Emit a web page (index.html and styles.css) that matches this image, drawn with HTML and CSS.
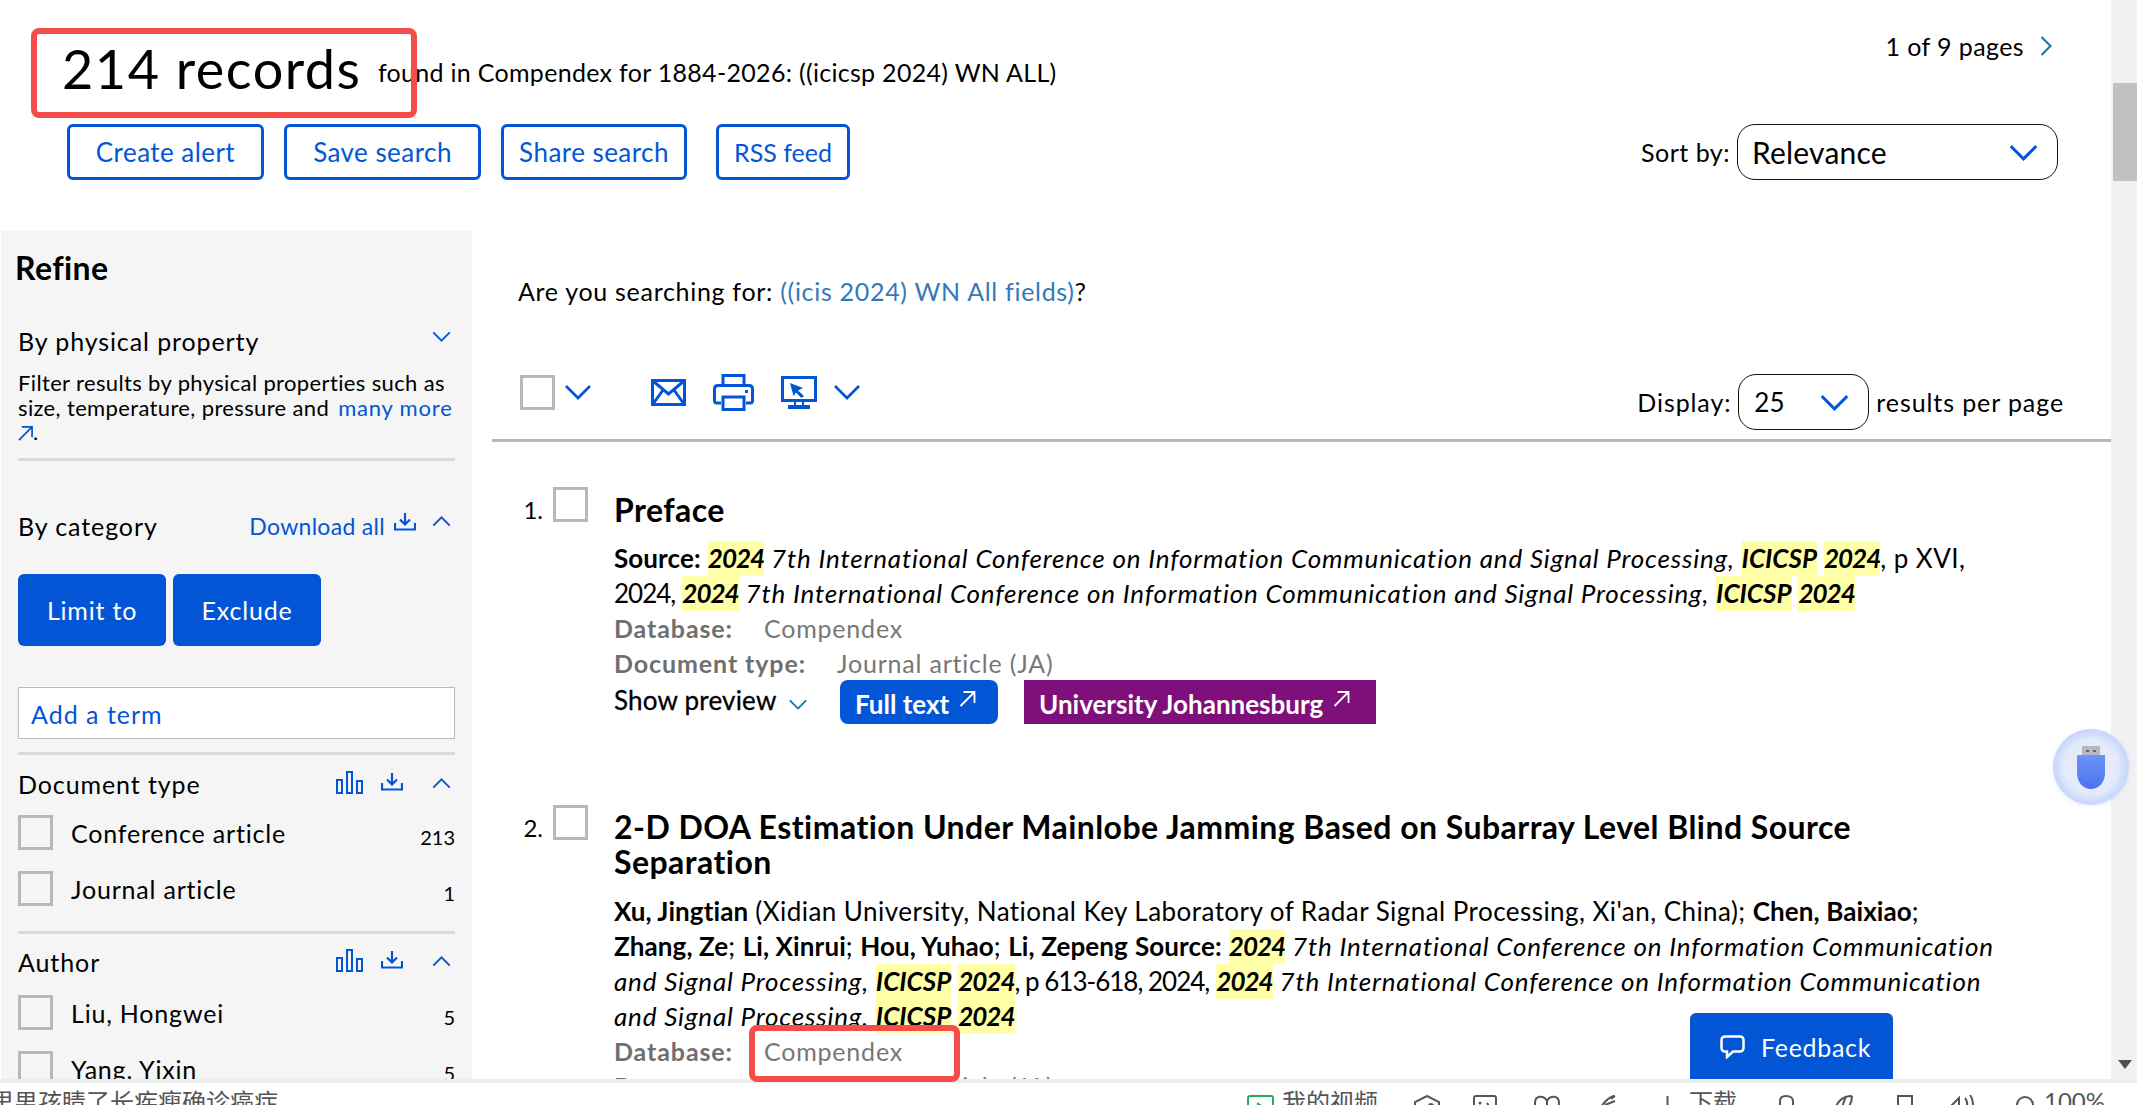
FILE: index.html
```html
<!DOCTYPE html>
<html lang="en">
<head>
<meta charset="utf-8">
<title>Compendex search results</title>
<link rel="stylesheet" href="styles.css">
</head>
<body>
<svg class="defs" width="0" height="0" aria-hidden="true">
  <symbol id="down" viewBox="0 0 20 12"><path d="M1 1.5 10 10.5 19 1.5" fill="none" stroke="currentColor" stroke-width="2"/></symbol>
  <symbol id="up" viewBox="0 0 20 12"><path d="M1 10.5 10 1.5 19 10.5" fill="none" stroke="currentColor" stroke-width="2"/></symbol>
  <symbol id="dl" viewBox="0 0 22 18"><path d="M11 0V11M6 6.5 11 11.500 16 6.500M1 10V16.500H21V10" fill="none" stroke="currentColor" stroke-width="2.200"/></symbol>
  <symbol id="bars" viewBox="0 0 27 23"><path d="M1 9H6V22H1ZM11 1H16V22H11ZM21 10H26V22H21Z" fill="none" stroke="currentColor" stroke-width="2"/></symbol>
  <symbol id="ext" viewBox="0 0 16 16"><path d="M1 15 15 1M4 1H15V12" fill="none" stroke="currentColor" stroke-width="1.800"/></symbol>
</svg>
<div class="app">
  <div class="viewport">
    <div class="content">
      <header class="head">
        <div class="head-row">
          <h1 class="count"><span class="count-num">214 records</span> <span class="count-rest">found in Compendex for 1884-2026: ((icicsp 2024) WN ALL)</span></h1>
          <div class="pages">1 of 9 pages
            <svg class="pages-next" width="12" height="20" viewBox="0 0 12 20"><path d="M1.500 1 10.500 10 1.500 19" fill="none" stroke="currentColor" stroke-width="2"/></svg>
          </div>
        </div>
        <div class="head-row actions-row">
          <div class="actions">
            <a class="btn-out btn-a">Create alert</a>
            <a class="btn-out btn-b">Save search</a>
            <a class="btn-out btn-c">Share search</a>
            <a class="btn-out btn-d">RSS feed</a>
          </div>
          <div class="sort">
            <span>Sort by:</span>
            <div class="select select-sort">Relevance <svg class="sel-chev" width="29" height="17"><use href="#down"/></svg></div>
          </div>
        </div>
      </header>
      <div class="layout">
        <aside class="side">
          <h2 class="refine">Refine</h2>
          <div class="side-head first"><span>By physical property</span><svg class="chev" width="19" height="11"><use href="#down"/></svg></div>
          <p class="side-desc">Filter results by physical properties such as<br>size, temperature, pressure and <a class="blue">many more</a><br><svg class="blue desc-ext" width="15" height="15"><use href="#ext"/></svg>.</p>
          <div class="rule rule-a"></div>
          <div class="side-head cat"><span>By category</span>
            <span class="side-tools"><a class="blue dl-all">Download all</a><svg class="tool" width="22" height="18"><use href="#dl"/></svg><svg class="chev" width="19" height="11"><use href="#up"/></svg></span>
          </div>
          <div class="limit-row"><button class="btn-fill">Limit to</button><button class="btn-fill">Exclude</button></div>
          <div class="add-term">Add a term</div>
          <div class="rule rule-b"></div>
          <div class="side-head facet"><span>Document type</span>
            <span class="side-tools"><svg class="tool" width="27" height="23"><use href="#bars"/></svg><svg class="tool" width="22" height="18"><use href="#dl"/></svg><svg class="chev" width="19" height="11"><use href="#up"/></svg></span>
          </div>
          <div class="term"><span class="box"></span><span class="term-name">Conference article</span><span class="term-n">213</span></div>
          <div class="term"><span class="box"></span><span class="term-name">Journal article</span><span class="term-n">1</span></div>
          <div class="rule rule-c"></div>
          <div class="side-head facet facet-author"><span>Author</span>
            <span class="side-tools"><svg class="tool" width="27" height="23"><use href="#bars"/></svg><svg class="tool" width="22" height="18"><use href="#dl"/></svg><svg class="chev" width="19" height="11"><use href="#up"/></svg></span>
          </div>
          <div class="term term-first"><span class="box"></span><span class="term-name">Liu, Hongwei</span><span class="term-n">5</span></div>
          <div class="term"><span class="box"></span><span class="term-name">Yang, Yixin</span><span class="term-n">5</span></div>
        </aside>
        <main class="results">
          <p class="suggest">Are you searching for: <a class="suggest-link">((icis 2024) WN All fields)</a>?</p>
          <div class="toolbar">
            <div class="tb-left">
              <span class="box"></span>
              <svg class="blue tb-chev" width="28" height="16"><use href="#down"/></svg>
              <svg class="blue tb-mail" width="35" height="27" viewBox="0 0 35 27"><path d="M1.500 1.500H33.500V25.500H1.500ZM2 2 17.500 15 33 2M2 25 12 11M33 25 23 11" fill="none" stroke="currentColor" stroke-width="3"/></svg>
              <svg class="blue tb-print" width="41" height="37" viewBox="0 0 41 37"><path d="M10 11V1.500H31V11M8 29H3.500C2 29 1.500 28 1.500 26.500V15C1.500 12.500 3 11.500 5 11.500H36C38 11.500 39.500 12.500 39.500 15V26.500C39.500 28 39 29 37.500 29H33M10 23H31V35.500H10Z" fill="none" stroke="currentColor" stroke-width="3"/><rect x="32" y="16" width="3" height="3" fill="currentColor"/></svg>
              <svg class="blue tb-screen" width="36" height="33" viewBox="0 0 36 33"><path d="M1.500 1.500H34.500V24.500H1.500Z" fill="none" stroke="currentColor" stroke-width="3"/><path d="M9 7 22 12 17 14.500 23 20 20.500 22 15 16.500 12.500 20Z" fill="currentColor"/><path d="M14 26V29M22 26V29" stroke="currentColor" stroke-width="2"/><rect x="7" y="29" width="22" height="4" fill="currentColor"/></svg>
              <svg class="blue tb-chev2" width="28" height="16"><use href="#down"/></svg>
            </div>
            <div class="tb-right">
              <span>Display:</span>
              <div class="select select-num">25 <svg class="sel-chev" width="29" height="17"><use href="#down"/></svg></div>
              <span>results per page</span>
            </div>
          </div>

          <article class="item item-one">
            <span class="num">1.</span>
            <span class="box"></span>
            <div class="body">
              <h3 class="title">Preface</h3>
              <div class="cite"><b>Source:</b> <i><mark class="yr">2024</mark> 7th International Conference on Information Communication and Signal Processing, <mark>ICICSP</mark> <mark class="yr">2024</mark></i>, p XVI,<br><span class="pub">2024,</span> <i><mark class="yr">2024</mark> 7th International Conference on Information Communication and Signal Processing, <mark>ICICSP</mark> <mark class="yr">2024</mark></i></div>
              <div class="meta"><b>Database:</b><span class="db">Compendex</span></div>
              <div class="meta"><b>Document type:</b><span class="db">Journal article (JA)</span></div>
              <div class="links">
                <span class="preview">Show preview <svg class="prev-chev" width="18" height="11"><use href="#down"/></svg></span>
                <a class="link-btn link-full">Full text <svg width="17" height="16"><use href="#ext"/></svg></a>
                <a class="link-btn link-uni">University Johannesburg <svg width="17" height="16"><use href="#ext"/></svg></a>
              </div>
            </div>
          </article>

          <article class="item item-two">
            <span class="num">2.</span>
            <span class="box"></span>
            <div class="body">
              <h3 class="title">2-D DOA Estimation Under Mainlobe Jamming Based on Subarray Level Blind Source<br>Separation</h3>
              <div class="cite"><b>Xu, Jingtian</b> (Xidian University, National Key Laboratory of Radar Signal Processing, Xi'an, China); <b>Chen, Baixiao</b>;<br><b>Zhang, Ze</b>; <b>Li, Xinrui</b>; <b>Hou, Yuhao</b>; <b>Li, Zepeng</b> <b>Source:</b> <i><mark class="yr">2024</mark> 7th International Conference on Information Communication</i><br><i>and Signal Processing, <mark>ICICSP</mark> <mark class="yr">2024</mark></i><span class="pub">, p 613-618, 2024,</span> <i><mark class="yr">2024</mark> 7th International Conference on Information Communication</i><br><i>and Signal Processing, <mark>ICICSP</mark> <mark class="yr">2024</mark></i></div>
              <div class="meta"><b>Database:</b><span class="db">Compendex</span></div>
              <div class="meta"><b>Document type:</b><span class="db">Journal article (JA)</span></div>
            </div>
          </article>
        </main>
      </div>
      <a class="feedback">
        <svg width="25" height="24" viewBox="0 0 25 24"><path d="M5 1.500H20C22 1.500 23.500 3 23.500 5V13C23.500 15 22 16.500 20 16.500H13L7 22V16.500H5C3 16.500 1.500 15 1.500 13V5C1.500 3 3 1.500 5 1.500Z" fill="none" stroke="#fff" stroke-width="2.500"/></svg>
        Feedback
      </a>
    </div>
    <div class="scrollbar">
      <span class="sb-thumb"></span>
      <span class="sb-arrow"></span>
    </div>
    <div class="usb">
      <svg width="30" height="44" viewBox="0 0 30 44"><defs><linearGradient id="usbBody" x1="0" y1="0" x2="0" y2="1"><stop offset="0" stop-color="#6c93f8"/><stop offset="1" stop-color="#4d72f0"/></linearGradient></defs><rect x="6" y="0" width="18" height="11" fill="#b4b9c4"/><rect x="10" y="4" width="3" height="2" fill="#666"/><rect x="17" y="4" width="3" height="2" fill="#666"/><path d="M1 9H29V27C29 36 23 43 15 43S1 36 1 27Z" fill="url(#usbBody)"/></svg>
    </div>
    <span class="mark-box mark-count"></span>
    <span class="mark-box mark-db"></span>
  </div>
  <footer class="status">
    <span class="status-news">里男孩睛了长疾瘦确诊癌症</span>
    <div class="status-tools">
      <svg class="st st-play" width="27" height="24" viewBox="0 0 27 24"><rect x="1" y="1" width="25" height="22" rx="2" fill="none" stroke="#20b05a" stroke-width="2"/><path d="M10 7 18 12 10 17Z" fill="#20b05a"/></svg>
      <span class="st-text st-video">我的视频</span>
      <svg class="st st-hex" width="26" height="24" viewBox="0 0 26 24"><path d="M13 1 25 7V23H1V7Z" fill="none" stroke="#555" stroke-width="2"/><circle cx="10" cy="13" r="3" fill="#555"/><circle cx="17" cy="11" r="3" fill="#555"/></svg>
      <svg class="st st-pic" width="24" height="24" viewBox="0 0 24 24"><rect x="1" y="1" width="22" height="22" rx="2" fill="none" stroke="#555" stroke-width="2"/><circle cx="7" cy="8" r="1.500" fill="#555"/><path d="M14 8 18 14" stroke="#555" stroke-width="2"/></svg>
      <svg class="st st-heart" width="28" height="24" viewBox="0 0 28 24"><path d="M14 6C11 0 2 0 2 8S14 22 14 22 26 16 26 8 17 0 14 6ZM14 6V12" fill="none" stroke="#555" stroke-width="2"/></svg>
      <svg class="st st-pen" width="22" height="24" viewBox="0 0 22 24"><path d="M20 1C14 1 6 10 3 18M20 1 16 4M10 10 20 6" fill="none" stroke="#555" stroke-width="2"/></svg>
      <svg class="st st-arrow" width="15" height="24" viewBox="0 0 15 24"><path d="M7.500 1V20M1 12 7.500 20 14 12" fill="none" stroke="#555" stroke-width="2"/></svg>
      <span class="st-text st-dl">下载</span>
      <svg class="st st-bell" width="25" height="24" viewBox="0 0 25 24"><path d="M6 12V6C6 3 8 1 12 1S19 3 19 6V12M1 14H24" fill="none" stroke="#555" stroke-width="2"/></svg>
      <svg class="st st-leaf" width="20" height="24" viewBox="0 0 20 24"><path d="M18 1C8 1 1 8 1 18M18 1C18 8 14 14 8 18M12 1 6 18" fill="none" stroke="#555" stroke-width="2"/></svg>
      <svg class="st st-doc" width="20" height="24" viewBox="0 0 20 24"><path d="M4 24V1H18V24" fill="none" stroke="#555" stroke-width="2"/></svg>
      <svg class="st st-sound" width="25" height="24" viewBox="0 0 25 24"><path d="M1 12 10 3V24M16 3C19 6 19 14 16 20M21 0C25 5 25 17 21 23" fill="none" stroke="#555" stroke-width="2"/></svg>
      <svg class="st st-zoom" width="18" height="24" viewBox="0 0 18 24"><circle cx="9" cy="10" r="8" fill="none" stroke="#555" stroke-width="2"/></svg>
      <span class="st-text st-pct">100%</span>
    </div>
  </footer>
</div>
</body>
</html>
```
FILE: styles.css
```css
* { box-sizing: border-box; }
html, body { margin: 0; height: 100%; overflow: hidden; background: #fff; }
body { font-family: Lato, "Noto Sans CJK SC", sans-serif; color: #000; font-size: 25px; }
h1, h2, h3, p { margin: 0; font-weight: normal; }
a { color: inherit; text-decoration: none; }
.defs { position: absolute; }
.blue { color: #0256d6; }

.app { width: 2137px; height: 1105px; display: flex; flex-direction: column; overflow: hidden; }
.viewport { height: 1079px; display: flex; position: relative; flex: none; }
.content { width: 2111px; height: 1079px; overflow: hidden; position: relative; flex: none; }

/* header */
.head { height: 231px; padding: 0 53px 0 0; }
.head-row { display: flex; justify-content: space-between; }
.count { height: 124px; padding: 38px 0 0 62px; font-size: 25px; line-height: 62px; white-space: nowrap; }
.count-num { font-size: 54px; letter-spacing: 1.5px; }
.count-rest { margin-left: 10px; letter-spacing: 0.3px; vertical-align: 7px; }
.pages { padding: 28px 0 0 0; line-height: 36px; font-size: 25px; letter-spacing: 0.4px; margin-right: 6px; display: flex; align-items: center; gap: 16px; height: 64px; }
.pages-next { color: #0b76a8; }
.actions { display: flex; margin-left: 67px; gap: 20px; }
.btn-out { height: 56px; border: 3px solid #0256d6; border-radius: 6px; color: #0256d6; font-size: 26px; letter-spacing: 0.45px; display: flex; align-items: center; justify-content: center; }
.btn-a { width: 197px; }
.btn-b { width: 197px; }
.btn-c { width: 186px; }
.btn-d { width: 134px; margin-left: 9px; letter-spacing: 0; font-size: 25px; }
.sort { display: flex; align-items: center; gap: 7px; height: 56px; letter-spacing: 0.5px; }
.select { height: 56px; border: 1.500px solid #111; border-radius: 18px; display: flex; align-items: center; justify-content: space-between; letter-spacing: 0; }
.select-sort { width: 321px; padding: 0 19px 0 14px; font-size: 30px; letter-spacing: 0.2px; }
.sel-chev { color: #0256d6; }

/* layout */
.layout { display: flex; align-items: flex-start; }
.side { width: 471px; margin-left: 1px; height: 848px; overflow: hidden; background: #f5f5f5; padding: 17px 17px 0 17px; flex: none; }
.refine { font-size: 32px; font-weight: 700; line-height: 40px; margin-left: -3px; letter-spacing: 0.4px; }
.side-head { display: flex; justify-content: space-between; align-items: center; height: 30px; font-size: 25px; letter-spacing: 0.9px; }
.side-head.first { margin-top: 38px; }
.chev { color: #0256d6; margin-right: 4px; margin-top: -9px; }
.side-desc { margin-top: 15px; font-size: 22px; line-height: 24.667px; white-space: nowrap; letter-spacing: 0.36px; }
.side-desc a { letter-spacing: 0.8px; margin-left: 3px; }
.desc-ext { vertical-align: -1px; }
.rule { height: 3px; background: #d9d9d9; }
.rule-a { margin-top: 13px; }
.side-head.cat { margin-top: 50px; }
.side-tools { display: flex; align-items: center; gap: 9px; }
.dl-all { font-size: 23px; letter-spacing: 0.3px; margin-top: -1px; }
.tool { color: #0256d6; margin-top: -8px; }
.side-tools .chev { margin-left: 7px; margin-top: -9px; }
.limit-row { display: flex; gap: 7px; margin-top: 33px; }
.btn-fill { width: 148px; height: 72px; background: #0256d6; color: #fff; border: 0; border-radius: 6px; font: inherit; font-size: 25px; letter-spacing: 0.8px; padding: 0; }
.add-term { margin-top: 41px; height: 52px; background: #fff; border: 1.500px solid #bbb; color: #0256d6; padding: 2px 0 0 12px; display: flex; align-items: center; font-size: 25px; letter-spacing: 1px; }
.rule-b { margin-top: 13px; }
.side-head.facet { margin-top: 14px; }
.side-head.facet-author { margin-top: 13px; }
.side-head.facet .side-tools { gap: 18px; }
.side-head.facet .tool { margin-top: -4px; }
.side-head.facet .chev { margin-left: 11px; margin-top: -2px; }
.term { display: flex; align-items: center; height: 35px; margin-top: 16px; font-size: 25px; letter-spacing: 0.8px; }
.term-first { margin-top: 18px; }
.term + .term { margin-top: 21px; }
.box { display: block; flex: none; width: 35px; height: 35px; border: 3px solid #b8b8b8; background: #fff; }
.side .box { background: transparent; }
.term-name { margin-left: 18px; flex: 1; }
.term-n { font-size: 20px; margin-top: 9px; letter-spacing: 0; }
.rule-c { margin-top: 25px; }

/* results */
.results { flex: none; width: 1619px; margin-left: 20px; }
.suggest { margin: 43px 0 0 26px; line-height: 35px; font-size: 25px; letter-spacing: 0.7px; }
.suggest-link { color: #337ab7; }
.toolbar { margin-top: 62px; height: 71px; border-bottom: 3px solid #b8b8b8; display: flex; justify-content: space-between; padding: 0 47px 0 28px; }
.tb-left { display: flex; align-items: center; height: 42px; }
.tb-chev { margin-left: 9px; }
.tb-mail { margin-left: 59px; }
.tb-print { margin-left: 27px; }
.tb-screen { margin-left: 27px; }
.tb-chev2 { margin-left: 16px; }
.tb-right { display: flex; align-items: center; height: 56px; margin-top: 3px; gap: 7px; font-size: 25px; letter-spacing: 0.9px; }
.select-num { width: 131px; padding: 0 19px 0 15px; font-size: 26px; }

.item { display: flex; align-items: flex-start; padding-left: 26px; }
.item-one { padding-top: 45px; height: 363px; }
.num { width: 25px; text-align: right; font-size: 24px; line-height: 35px; margin-top: 5px; flex: none; }
.item .box { margin-left: 10px; }
.body { margin-left: 26px; padding-top: 5px; white-space: nowrap; flex: none; }
.item-two .body { padding-top: 4px; }
.title { font-size: 32px; font-weight: 700; line-height: 35px; margin-bottom: 14px; letter-spacing: 0.45px; }
.item-two .title { margin-bottom: 15px; }
.cite { font-size: 26px; line-height: 35px; letter-spacing: 0.45px; }
.cite b { letter-spacing: 0.1px; }
.cite i { letter-spacing: 0.82px; }
.cite .pub { letter-spacing: -1px; }
mark { background: #ffffa8; color: inherit; font-weight: 700; display: inline-block; height: 35px; letter-spacing: 0; }
.cite mark.yr { letter-spacing: -1px; }
.cite mark { letter-spacing: 0; }
.meta { font-size: 25px; line-height: 35px; color: #6f6f6f; letter-spacing: 0.6px; }
.meta b { letter-spacing: 0.9px; }
.db { margin-left: 31px; color: #777; letter-spacing: 0.8px; }
.links { display: flex; align-items: flex-start; height: 44px; margin-top: -1px; }
.preview { font-size: 26px; line-height: 36px; width: 226px; letter-spacing: 0.2px; -webkit-text-stroke: 0.3px #000; padding-top: 2px; }
.prev-chev { color: #0b76a8; margin-left: 6px; }
.link-btn { height: 44px; color: #fff; font-size: 26px; font-weight: 700; display: flex; align-items: center; gap: 10px; padding: 3px 0 0 15px; }
.link-btn svg { margin-top: -10px; }
.link-full { width: 158px; background: #0256d6; border-radius: 8px; }
.link-uni { width: 352px; background: #7f0f7a; margin-left: 26px; }

/* overlays */
.feedback { position: absolute; left: 1690px; top: 1013px; width: 203px; height: 66px; background: #0256d6; border-radius: 6px 6px 0 0; color: #fff; font-size: 25px; letter-spacing: 0.7px; display: flex; align-items: center; gap: 16px; padding-left: 30px; padding-top: 2px; }
.scrollbar { width: 26px; height: 1079px; background: #f1f1f1; position: relative; flex: none; }
.sb-thumb { position: absolute; left: 2px; right: 0; top: 83px; height: 98px; background: #c1c1c1; }
.sb-arrow { position: absolute; left: 7px; top: 1060px; border-left: 7px solid transparent; border-right: 7px solid transparent; border-top: 9px solid #505050; }
.usb { position: absolute; left: 2053px; top: 729px; width: 76px; height: 76px; padding-top: 2px; border-radius: 50%; background: radial-gradient(circle closest-side, #e8edfa 0, #e4eafb 72%, #d3dffc 84%, #c6d5fe 100%); box-shadow: 0 1px 4px rgba(120,150,240,.2); display: flex; align-items: center; justify-content: center; }
.mark-box { position: absolute; border: 6px solid #f44d4a; border-radius: 8px; }
.mark-count { left: 31px; top: 28px; width: 386px; height: 90px; }
.mark-db { left: 749px; top: 1025px; width: 211px; height: 57px; z-index: 5; }

/* status bar */
.status { flex: none; height: 26px; border-top: 4px solid #eeeeee; background: #fff; display: flex; justify-content: space-between; overflow: hidden; color: #555; font-size: 25px; line-height: 36px; white-space: nowrap; }
.status-news { font-family: "Noto Sans CJK SC", sans-serif; font-size: 24px; line-height: 36px; margin-left: -10px; }
.status-tools { display: flex; align-items: flex-start; padding-right: 32px; font-family: "Noto Sans CJK SC", sans-serif; }
.st { margin-top: 12px; flex: none; }
.st-text { font-size: 24px; line-height: 36px; }
.st-video { margin-left: 8px; }
.st-hex { margin-left: 36px; }
.st-pic { margin-left: 33px; }
.st-heart { margin-left: 36px; }
.st-pen { margin-left: 34px; }
.st-arrow { margin-left: 43px; }
.st-dl { margin-left: 14px; }
.st-bell { margin-left: 37px; }
.st-leaf { margin-left: 35px; }
.st-doc { margin-left: 40px; }
.st-sound { margin-left: 35px; }
.st-zoom { margin-left: 42px; }
.st-pct { margin-left: 10px; font-family: Lato, sans-serif; }
```
